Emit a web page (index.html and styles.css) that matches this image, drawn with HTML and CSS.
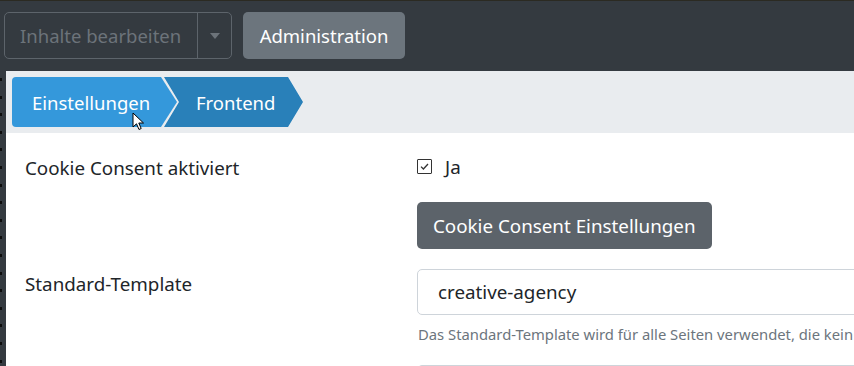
FILE: index.html
```html
<!DOCTYPE html>
<html lang="de">
<head>
<meta charset="utf-8">
<title>Einstellungen</title>
<link rel="stylesheet" href="styles.css">
</head>
<body>
<header class="topbar">
  <div class="btn-group">
    <span class="btn-outline">Inhalte bearbeiten</span>
    <span class="btn-outline caret-btn"><span class="caret"></span></span>
  </div>
  <span class="btn-admin">Administration</span>
</header>
<div class="main">
  <div class="strip"></div>
  <div class="page">
    <nav class="crumbbar">
      <span class="crumb crumb-first">Einstellungen</span>
      <span class="crumb crumb-second">Frontend</span>
      <svg class="cursor" width="13" height="20" viewBox="0 0 13 20"><path d="M1 1 L1 15 L4.5 11.8 L7 17.5 L9.2 16.5 L6.8 11 L11.5 11 Z" fill="#fff" stroke="#000" stroke-width="1" stroke-linejoin="round"/></svg>
    </nav>
    <div class="form">
      <div class="label row1">Cookie Consent aktiviert</div>
      <div class="field row1">
        <label class="check"><span class="box"><svg width="11" height="11" viewBox="0 0 11 11"><path d="M2 5.6 L4.4 8 L9 3" fill="none" stroke="#333" stroke-width="1.3"/></svg></span><span>Ja</span></label>
        <span class="btn-dark">Cookie Consent Einstellungen</span>
      </div>
      <div class="label row2">Standard-Template</div>
      <div class="field row2">
        <div class="select">creative-agency</div>
        <div class="help">Das Standard-Template wird für alle Seiten verwendet, die kein eigenes Template zugewiesen haben.</div>
        <div class="select next"></div>
      </div>
    </div>
  </div>
</div>
</body>
</html>
```
FILE: styles.css
```css
html, body {
  margin: 0;
  padding: 0;
  overflow: hidden;
  height: 366px;
}
body {
  background: #343a40;
  font-family: "Noto Sans", "Open Sans", sans-serif;
  color: #212529;
}
.topbar {
  border-top: 1px solid #2b2a22;
  box-sizing: border-box;
  height: 71px;
  padding: 11px 4px 0 4px;
  display: flex;
  gap: 11px;
  align-items: flex-start;
}
.btn-group {
  display: flex;
  height: 47px;
  border: 1px solid #5d646b;
  border-radius: 5px;
  box-sizing: border-box;
}
.btn-outline {
  display: flex;
  align-items: center;
  padding: 0 16px 0 15px;
  color: #6c737a;
  font-size: 18.5px;
  width: 192px;
  box-sizing: border-box;
  white-space: nowrap;
}
.caret-btn {
  width: 34px;
  padding: 0;
  justify-content: center;
  border-left: 1px solid #5d646b;
}
.caret {
  width: 0;
  height: 0;
  border-left: 5.5px solid transparent;
  border-right: 5.5px solid transparent;
  border-top: 6px solid #6c737a;
}
.btn-admin {
  display: flex;
  align-items: center;
  height: 47px;
  box-sizing: border-box;
  padding: 0 16px;
  width: 162px;
  justify-content: center;
  background: #6c757d;
  color: #fff;
  border-radius: 5px;
  font-size: 18.5px;
  white-space: nowrap;
}
.main {
  display: flex;
  height: 295px;
}
.strip {
  width: 6px;
  flex: none;
  background-image: repeating-linear-gradient(to bottom, #0c0c0c 0 3px, transparent 3px 17.6px);
  background-size: 2px 100%;
  background-repeat: no-repeat;
  background-position: 0 7px;
}
.page {
  flex: 1;
  background: #fff;
  min-width: 0;
  overflow: hidden;
}
.crumbbar {
  position: relative;
  background: #e9ecef;
  padding: 6px 6px;
  display: flex;
  height: 62px;
  box-sizing: border-box;
}
.crumb {
  height: 50px;
  display: flex;
  align-items: center;
  color: #fff;
  font-size: 18.5px;
  box-sizing: border-box;
  white-space: nowrap;
}
.crumb-first {
  width: 165px;
  padding-left: 20px;
  background: #3498db;
  border-radius: 4px 0 0 4px;
  clip-path: polygon(0 0, 149px 0, 165px 50%, 149px 100%, 0 100%);
}
.crumb-second {
  width: 139px;
  margin-left: -13px;
  padding-left: 32px;
  background: #2980b9;
  clip-path: polygon(0 0, 124px 0, 139px 50%, 124px 100%, 0 100%, 15px 50%);
}
.cursor {
  position: absolute;
  left: 126px;
  top: 41px;
}
.form {
  display: grid;
  grid-template-columns: 392px 560px;
  padding-left: 19px;
  font-size: 18.8px;
}
.label {
  padding-top: 22px;
}
.row1.field {
  padding-top: 26px;
}
.check {
  display: flex;
  align-items: center;
  gap: 13px;
  height: 15px;
}
.box {
  width: 15px;
  height: 15px;
  box-sizing: border-box;
  border: 1.5px solid #333;
  border-radius: 1px;
  display: flex;
  align-items: center;
  justify-content: center;
}
.btn-dark {
  display: inline-flex;
  align-items: center;
  margin-top: 28px;
  height: 47px;
  box-sizing: border-box;
  padding: 0 16px;
  background: #5c636a;
  color: #fff;
  border-radius: 5px;
  width: 295px;
  white-space: nowrap;
}
.row2.label {
  padding-top: 22px;
}
.row2.field {
  padding-top: 20px;
}
.select {
  height: 46px;
  box-sizing: border-box;
  border: 1px solid #ced4da;
  border-radius: 5px;
  padding: 0 20px;
  display: flex;
  align-items: center;
}
.help {
  font-size: 14.8px;
  color: #6c757d;
  margin-top: 9px;
  white-space: nowrap;
  padding-left: 1px;
}
.select.next {
  margin-top: 21px;
}
```
